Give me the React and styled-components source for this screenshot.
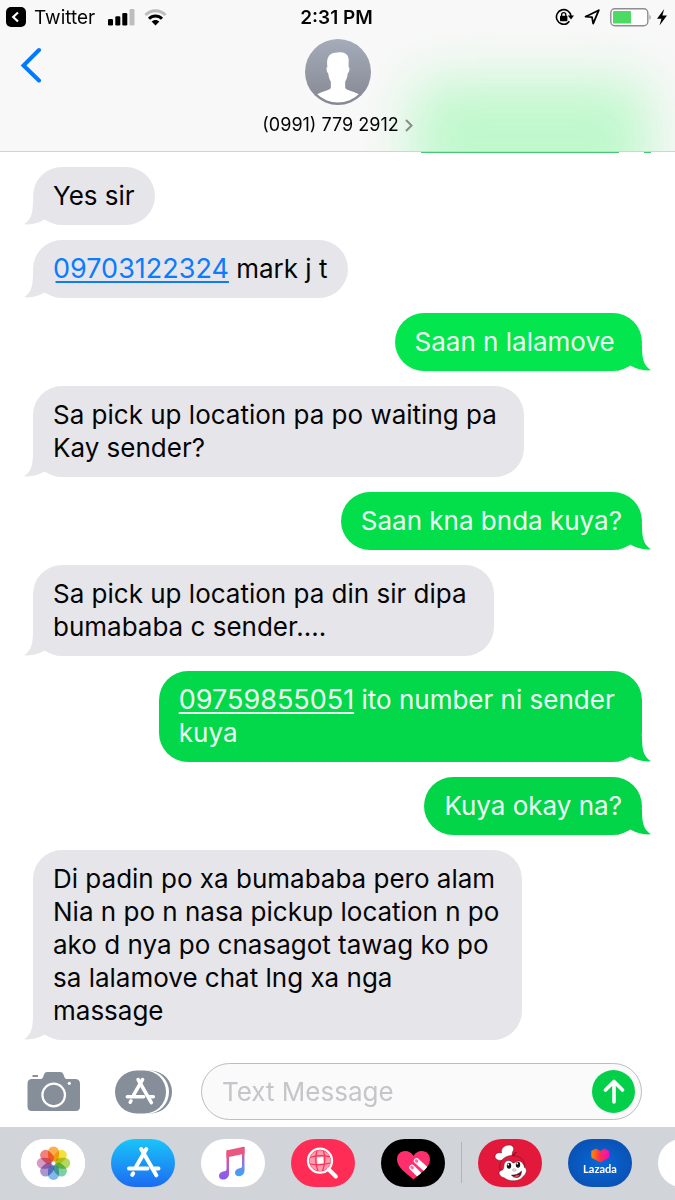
import React, { Fragment } from 'react';
import styled, { createGlobalStyle, css } from 'styled-components';

const GlobalStyle = createGlobalStyle`
  * {
    box-sizing: border-box;
  }
  body {
    margin: 0;
    background: #fff;
    color: #050507;
    font-family: Inter, "Liberation Sans", sans-serif;
  }
  button {
    border: 0;
    padding: 0;
    background: none;
    font: inherit;
    color: inherit;
    cursor: pointer;
  }
  svg {
    display: block;
  }
`;

const Screen = styled.div`
  display: flex;
  flex-direction: column;
  min-height: 100vh;
  overflow: hidden;
`;

const Header = styled.header`
  position: relative;
  background: #f8f8f8;
  border-bottom: 1px solid #d2d3d5;
`;

const GlowClip = styled.div`
  position: absolute;
  inset: 0;
  overflow: hidden;
  pointer-events: none;
  &::after {
    content: "";
    position: absolute;
    right: 26px;
    bottom: -50px;
    width: 236px;
    height: 120px;
    border-radius: 20px;
    background: #c0f8cc;
    filter: blur(26px);
  }
`;

const StatusBar = styled.div`
  position: relative;
  display: grid;
  grid-template-columns: 1fr auto 1fr;
  align-items: center;
  height: 34px;
  padding: 0 8px 0 6px;
  font-size: 19px;
`;

const StatusGroup = styled.div`
  display: flex;
  align-items: center;
  gap: ${props => props.$gap}px;
  justify-content: ${props => (props.$end ? 'flex-end' : 'flex-start')};
`;

const BackToApp = styled.button`
  display: flex;
  align-items: center;
  gap: 8px;
  margin-right: 4px;
`;

const Clock = styled.time`
  font-size: 19px;
  font-weight: 600;
`;

const NavBar = styled.div`
  position: relative;
  display: grid;
  grid-template-columns: 1fr auto 1fr;
  align-items: start;
  height: 117px;
  padding: 5px 20px 0;
`;

const BackButton = styled.button`
  justify-self: start;
  padding-top: 8px;
`;

const Contact = styled.button`
  display: flex;
  flex-direction: column;
  align-items: center;
  gap: 8px;
  font-size: 18px;
  line-height: 24px;
`;

const ContactName = styled.span`
  display: flex;
  align-items: center;
  gap: 6px;
`;

const Thread = styled.main`
  position: relative;
  flex: 1;
  display: flex;
  flex-direction: column;
  align-items: flex-start;
  gap: 15px;
  padding: 15px 33px 0;
`;

const ScrolledBubble = styled.div`
  position: absolute;
  top: 0;
  right: 24px;
  width: 230px;
  height: 1px;
  background: linear-gradient(to right, #45c873 86%, transparent 86%, transparent 97%, #45c873 97%);
`;

const Bubble = styled.div`
  position: relative;
  max-width: 82%;
  padding: 12px 20px 13px;
  border-radius: 29px;
  font-size: 26px;
  line-height: 33px;
  background: #e5e5ea;
  ${props => props.$sent && css`
    align-self: flex-end;
    background: ${props.$tone};
    color: #effff2;
  `}
`;

const Line = styled.span`
  display: block;
  white-space: break-spaces;
`;

const Tail = styled.svg`
  position: absolute;
  bottom: 0;
  width: 34px;
  height: 26px;
  left: -9px;
  fill: #e5e5ea;
  ${props => props.$sent && css`
    left: auto;
    right: -9px;
    transform: scaleX(-1);
    fill: ${props.$tone};
  `}
`;

const PhoneLink = styled.a`
  color: ${props => (props.$sent ? 'inherit' : '#0b7bff')};
  font-size: 27px;
  text-decoration: underline;
  text-decoration-thickness: 2px;
  text-underline-offset: 3px;
`;

const Composer = styled.form`
  display: flex;
  align-items: center;
  gap: 28px;
  padding: 23px 33px 7px 27px;
`;

const Tools = styled.div`
  display: flex;
  align-items: center;
  gap: 35px;
`;

const Field = styled.div`
  flex: 1;
  min-width: 0;
  display: flex;
  align-items: center;
  height: 57px;
  padding: 0 6px 0 20px;
  border: 1px solid #bcbdc2;
  border-radius: 29px;
  background: #fafafa;
`;

const TextInput = styled.input`
  flex: 1;
  min-width: 0;
  border: 0;
  outline: 0;
  padding: 0;
  background: none;
  font: inherit;
  font-size: 26px;
  &::placeholder {
    color: #c5c5ca;
    opacity: 1;
  }
`;

const SendButton = styled.button`
  display: grid;
  place-items: center;
  width: 43px;
  height: 43px;
  border-radius: 50%;
  background: #04cf48;
`;

const Dock = styled.nav`
  display: flex;
  align-items: center;
  gap: 26px;
  height: 73px;
  padding: 0 0 2px 21px;
  background: #d1d4d9;
  overflow: hidden;
`;

const AppButton = styled.button`
  flex: none;
  width: 64px;
  height: 48px;
  border-radius: 24px;
  overflow: hidden;
  background: ${props => props.$bg};
`;

const Divider = styled.span`
  flex: none;
  width: 1px;
  height: 41px;
  margin: 0 -10px;
  background: #b1b4ba;
`;

// trailing spaces are part of what was typed and widen the bubble
const messages = [
  { lines: ['Yes sir'] },
  { phone: '09703122324', lines: [' mark j t'] },
  { sent: true, tone: '#03e64d', lines: ['Saan n lalamove '] },
  { lines: ['Sa pick up location pa po waiting pa ', 'Kay sender?'] },
  { sent: true, tone: '#03de4b', lines: ['Saan kna bnda kuya?'] },
  { lines: ['Sa pick up location pa din sir dipa ', 'bumababa c sender....'] },
  { sent: true, tone: '#03d84a', phone: '09759855051', lines: [' ito number ni sender ', 'kuya'] },
  { sent: true, tone: '#03d549', lines: ['Kuya okay na?'] },
  {
    lines: [
      'Di padin po xa bumababa pero alam ',
      'Nia n po n nasa pickup location n po',
      'ako d nya po cnasagot tawag ko po ',
      'sa lalamove chat lng xa nga ',
      'massage',
    ],
  },
];

const Message = ({ sent, tone, phone, lines }) => (
  <Bubble $sent={sent} $tone={tone}>
    <Tail $sent={sent} $tone={tone} viewBox="0 0 34 26" aria-hidden="true">
      <path d="M9 0 C9 13 8 20 0 25.300 C8 26 15 24 20.500 20.500 L34 26 L30 0 Z" />
    </Tail>
    {lines.map((line, i) => (
      <Line key={line}>
        {i === 0 && phone && <PhoneLink $sent={sent} href={`tel:${phone}`}>{phone}</PhoneLink>}
        {line}
      </Line>
    ))}
  </Bubble>
);

const SignalIcon = () => (
  <svg width="27" height="17" viewBox="0 0 27 17">
    <rect x="0" y="10" width="5" height="6.500" rx="1.300" />
    <rect x="7.300" y="7.300" width="5" height="9.200" rx="1.300" />
    <rect x="14.300" y="4" width="5" height="12.500" rx="1.300" />
    <rect x="21.500" y="0" width="5" height="16.500" rx="1.300" fill="#bdbdbf" />
  </svg>
);

const WifiIcon = () => (
  <svg width="23" height="17" viewBox="0 0 23 17" fill="none">
    <path d="M1.500 6 C7 .2 16 .2 21.500 6" stroke="#bdbdbf" strokeWidth="3" />
    <path d="M5 9.700 C8.700 6 14.300 6 18 9.700" stroke="#000" strokeWidth="3" />
    <path d="M7.600 12.600 C9.800 10.400 13.200 10.400 15.400 12.600 L11.500 16.600 Z" fill="#000" />
  </svg>
);

const RotationLockIcon = () => (
  <svg width="19" height="18" viewBox="0 0 19 18" fill="none">
    <path d="M12.500 15.200 A7.300 7.300 0 1 1 16 8" stroke="#000" strokeWidth="1.600" />
    <path d="M12 15.500 A7.300 7.300 0 0 0 14.300 13.300" stroke="#000" strokeWidth="1.600" />
    <path d="M12.800 7.500 H19 L16 11.500 Z" fill="#000" />
    <rect x="5" y="7.800" width="7.400" height="5.400" rx=".8" fill="#000" />
    <path d="M6.600 8 V6.700 a2.100 2.100 0 0 1 4.200 0 V8" stroke="#000" strokeWidth="1.300" />
  </svg>
);

const LocationIcon = () => (
  <svg width="16" height="16" viewBox="0 0 16 16" fill="none" stroke="#000" strokeWidth="1.800" strokeLinejoin="round">
    <path d="M14.800 1.200 L1.500 7.700 L8 8.200 L9.200 14.700 Z" />
  </svg>
);

const BatteryIcon = () => (
  <svg width="42" height="19" viewBox="0 0 42 19">
    <rect x=".8" y=".8" width="37" height="17" rx="4" fill="#fdfdfd" stroke="#8e8e90" strokeWidth="1.400" />
    <rect x="3" y="3" width="18" height="12.600" rx="1.200" fill="#4cd964" />
    <path d="M39.500 6.500 q2.300 2.800 0 5.600 z" fill="#8e8e90" />
  </svg>
);

const BoltIcon = () => (
  <svg width="10" height="17" viewBox="0 0 10 17">
    <path d="M7.200 0 L0 9.700 H4.500 L2.500 16.500 L10 6.600 H5.400 Z" />
  </svg>
);

const Avatar = () => (
  <svg width="66" height="66" viewBox="0 0 66 66">
    <defs>
      <linearGradient id="avatar" x1="0" y1="0" x2="0" y2="1">
        <stop offset="0" stopColor="#a5abb9" />
        <stop offset="1" stopColor="#858892" />
      </linearGradient>
      <clipPath id="avatarClip"><circle cx="33" cy="33" r="30.500" /></clipPath>
    </defs>
    <circle cx="33" cy="33" r="33" fill="url(#avatar)" />
    <path
      clipPath="url(#avatarClip)"
      fill="#fff"
      d="M33 13.500 C40 12.500 44 16 43.700 22 L43.600 28 C45.200 28.500 44.500 33.500 42.700 34.500 C42.300 38.500 41.500 40.500 40.200 42.500 V49 C42 51.500 50 52.500 56 56.500 L50 66 H16 L10 56.500 C16 52.500 24 51.500 25.800 49 V42.500 C24.500 40.500 23.700 38.500 23.300 34.500 C21.500 33.500 20.800 28.500 22.400 28 C21 19 24 13 33 13.500 Z"
    />
  </svg>
);

const CameraIcon = () => (
  <svg width="53" height="40" viewBox="0 0 53 40" fill="#858e99">
    <rect x="5.500" y="3" width="5.500" height="2" rx=".6" />
    <path d="M5 7 H13 C16 7 16 5 17 2.500 C17.700 .8 18.500 0 20.500 0 H33 C35 0 35.800 .8 36.500 2.500 C37.500 5 37.500 7 40.500 7 H48 Q53 7 53 12 V34.500 Q53 39 48.500 39 H5 Q.5 39 .5 34.500 V12 Q.5 7 5 7 Z" />
    <circle cx="26.700" cy="23" r="11.300" fill="none" stroke="#fff" strokeWidth="2.200" />
    <circle cx="42.300" cy="11.300" r="1.600" fill="#fff" />
  </svg>
);

const storeStrokes = (
  <g fill="none" stroke="#fff" strokeWidth="4" strokeLinecap="round">
    <path d="M35.300 10 L25.200 27.500 M22.200 34.300 L21.200 35.800" />
    <path d="M30.200 10 L45.300 36.300" />
    <path d="M18 29.500 H36.500 M43.500 29.500 H47.500" />
  </g>
);

const StoreToggleIcon = () => (
  <svg width="58" height="44" viewBox="0 0 58 44">
    <rect x="10" y=".5" width="47" height="43" rx="21.500" fill="#858e99" />
    <rect x="5" y="0" width="49" height="44" rx="22" fill="#fff" />
    <rect x="0" y=".5" width="51" height="43" rx="21.500" fill="#858e99" />
    <g transform="translate(-3.500 .7) scale(.88)">{storeStrokes}</g>
  </svg>
);

const petals = ['#fbae4a', '#f5e13a', '#b4d95f', '#7fcfa6', '#82b9ea', '#a995d0', '#d79ac8', '#f4807a'];

const PetalShape = styled.rect`
  mix-blend-mode: multiply;
`;

const PhotosIcon = () => (
  <svg width="64" height="48" viewBox="0 0 64 48">
    <rect width="64" height="48" fill="#fff" />
    {petals.map((color, i) => (
      <PetalShape
        key={color}
        x="27"
        y="7.500"
        width="11"
        height="15"
        rx="5.500"
        fill={color}
        transform={`rotate(${i * 45} 32.500 24.200)`}
      />
    ))}
  </svg>
);

const StoreIcon = () => (
  <svg width="64" height="48" viewBox="0 0 64 48">{storeStrokes}</svg>
);

const MusicIcon = () => (
  <svg width="64" height="48" viewBox="0 0 64 48">
    <defs>
      <linearGradient id="noteLeft" x1="0" y1="0" x2="0" y2="1">
        <stop offset=".1" stopColor="#f4526d" />
        <stop offset=".55" stopColor="#b45ccc" />
        <stop offset="1" stopColor="#7d5cf5" />
      </linearGradient>
      <linearGradient id="noteRight" x1="0" y1="0" x2="0" y2="1">
        <stop offset=".1" stopColor="#ee5277" />
        <stop offset=".55" stopColor="#8a7be0" />
        <stop offset="1" stopColor="#35a7fa" />
      </linearGradient>
    </defs>
    <path fill="url(#noteLeft)" d="M25.500 11.500 H28 V35 C28 38.500 25 40.500 22 40.500 C19.500 40.500 18 39 18 36.700 C18 34 20.300 32.800 23 32.300 C25 32 25.500 31.500 25.500 30 Z" />
    <path fill="url(#noteRight)" d="M41 8 H43.500 V31.500 C43.500 35 41 37.200 38 37.200 C35.500 37.200 34 35.700 34 33.500 C34 31 36 29.700 38.700 29.200 C40.500 28.900 41 28.400 41 27 Z" />
    <path fill="#e95680" d="M25.500 12.500 Q25.500 11.500 26.500 11.200 L42.500 7.800 Q43.500 7.600 43.500 8.600 V14.800 L25.500 18.500 Z" />
  </svg>
);

const SearchIcon = () => (
  <svg width="64" height="48" viewBox="0 0 64 48" fill="none">
    <circle cx="29" cy="21.700" r="10.500" fill="#ff9bad" />
    <path d="M26 18.500 L32 18 L32.500 24 L26.500 25 Z" fill="#fff" />
    <path d="M18.500 18.500 Q29 15 39.500 18 M18.500 25 Q29 27 39.500 24 M26 11.500 Q23 22 27 32 M32.500 11.500 Q35.500 22 31.500 32" stroke="#ff2d55" strokeWidth="1.200" />
    <circle cx="29" cy="21.700" r="12" stroke="#fff" strokeWidth="2.300" />
    <path d="M37.800 30.500 L44.800 37.500" stroke="#fff" strokeWidth="4" strokeLinecap="round" />
  </svg>
);

const HeartTouchIcon = () => (
  <svg width="64" height="48" viewBox="0 0 64 48">
    <defs>
      <clipPath id="heartClip">
        <path d="M32.500 40.500 C25 34 16 28 16 20.500 C16 15.500 19.500 12 24 12 C28 12 31 14 32.500 17 C34 14 37 12 41 12 C45.500 12 49 15.500 49 20.500 C49 28 40 34 32.500 40.500 Z" />
      </clipPath>
    </defs>
    <g clipPath="url(#heartClip)">
      <rect width="64" height="48" fill="#ff2e6c" />
      <g fill="none" strokeLinecap="round">
        <path d="M31 28.500 L46 43.500 M35.500 21.800 L54 38.500" stroke="#fff" strokeWidth="5.500" />
        <path d="M30.800 28.300 L31.300 28.800 M35.300 21.600 L35.800 22.100" stroke="#ff6d97" strokeWidth="3" />
      </g>
    </g>
  </svg>
);

const JollibeeIcon = () => (
  <svg width="64" height="48" viewBox="0 0 64 48">
    <g stroke="#5b1020" strokeWidth=".5">
      <path d="M25 21 C21 22.500 16.500 20 17 17 C17.500 14 21 13 23.500 14 C22.500 10 26 6 31 6 C35.500 6 37 10 34.500 13 C34 15.500 34 16.500 34.200 18 Z" fill="#fff" />
      <path d="M22 31 C20 23 26 16.500 34 16.500 C43 16.500 48 22 46.500 31 Z" fill="#e3193c" />
      <path d="M22 32 C19.500 34 22 38 26.500 39 C31 43 42 43 45 37.500 C49 35 49.500 29 46.500 28.500 C46 24 42 20.500 38.500 22.500 C37 23.500 36 24 35 24 C32 20 26.500 21 26 26 C25.500 29 26 31 22 32 Z" fill="#fff" />
      <path d="M33.500 36 C37 36.500 41 35 43.500 32 C43.500 36 41.500 38.800 38.500 38.600 C36 38.500 34.500 37.500 33.500 36 Z" fill="#5b1020" />
    </g>
    <path d="M36 37.500 Q39 35.500 41.700 36.200 Q39.500 39.500 36 37.500" fill="#ee4458" />
    <ellipse cx="31" cy="26.800" rx="2.200" ry="3" fill="#151515" />
    <ellipse cx="40" cy="25.800" rx="2.200" ry="3" fill="#151515" />
    <circle cx="30.300" cy="25.500" r=".9" fill="#fff" />
    <circle cx="39.300" cy="24.500" r=".9" fill="#fff" />
    <ellipse cx="36.300" cy="31" rx="1.800" ry="1.200" fill="#f4eeee" stroke="#888" strokeWidth=".5" />
    <path d="M35 17 Q36 13.500 38.500 13.500" fill="none" stroke="#5b1020" strokeWidth="1" />
  </svg>
);

const LazadaIcon = () => (
  <svg width="64" height="48" viewBox="0 0 64 48">
    <defs>
      <linearGradient id="lazHeart">
        <stop offset="0" stopColor="#ff8a00" />
        <stop offset=".5" stopColor="#fb2f4b" />
        <stop offset="1" stopColor="#f208c4" />
      </linearGradient>
    </defs>
    <path d="M23.300 12 L27.500 9.800 Q28.300 9.500 29 10 L32.300 12 L35.500 10 Q36.300 9.500 37 9.800 L41.300 12 V17.500 Q41.300 18.500 40.500 19 L32.300 23.500 L24 19 Q23.300 18.500 23.300 17.500 Z" fill="url(#lazHeart)" />
    <path d="M32.300 12 L41 12.500 L32.300 17.500 Z" fill="#f5289b" opacity=".6" />
    <text x="32" y="34" textAnchor="middle" fill="#fff" fontFamily="Lato, sans-serif" fontWeight="700" fontSize="11">Lazada</text>
  </svg>
);

const pinned = [
  { name: 'Photos', bg: '#fff', Icon: PhotosIcon },
  { name: 'App Store', bg: 'linear-gradient(#19c5f9, #1c6bf2)', Icon: StoreIcon },
  { name: 'Music', bg: '#fff', Icon: MusicIcon },
  { name: 'Image search', bg: '#ff2d55', Icon: SearchIcon },
  { name: 'Digital Touch', bg: '#000', Icon: HeartTouchIcon },
];

const installed = [
  { name: 'Jollibee', bg: '#e3193c', Icon: JollibeeIcon },
  { name: 'Lazada', bg: 'radial-gradient(#0868d8, #0a4aa8)', Icon: LazadaIcon },
  { name: 'More', bg: '#fff', Icon: Fragment },
];

const renderApp = ({ name, bg, Icon }) => (
  <AppButton key={name} type="button" aria-label={name} $bg={bg}><Icon /></AppButton>
);

const App = () => (
  <Screen>
    <GlobalStyle />
    <Header>
      <GlowClip />
      <StatusBar>
        <StatusGroup $gap={9}>
          <BackToApp type="button">
            <svg width="20" height="20" viewBox="0 0 20 20">
              <rect width="20" height="20" rx="5" />
              <path d="M12 5.500 L7.200 10 L12 14.500" fill="none" stroke="#fff" strokeWidth="2.200" />
            </svg>
            Twitter
          </BackToApp>
          <SignalIcon />
          <WifiIcon />
        </StatusGroup>
        <Clock>2:31 PM</Clock>
        <StatusGroup $gap={10} $end>
          <RotationLockIcon />
          <LocationIcon />
          <StatusGroup $gap={5}>
            <BatteryIcon />
            <BoltIcon />
          </StatusGroup>
        </StatusGroup>
      </StatusBar>
      <NavBar>
        <BackButton type="button" aria-label="Back">
          <svg width="22" height="36" viewBox="0 0 22 36" fill="none" stroke="#007aff" strokeWidth="4" strokeLinecap="round">
            <path d="M19 3 L3.500 18.500 L19 33.500" />
          </svg>
        </BackButton>
        <Contact type="button">
          <Avatar />
          <ContactName>
            (0991) 779 2912
            <svg width="8" height="13" viewBox="0 0 8 13" fill="none" stroke="#8a8a8e" strokeWidth="2">
              <path d="M1 1 L6.500 6.500 L1 12" />
            </svg>
          </ContactName>
        </Contact>
      </NavBar>
    </Header>
    <Thread>
      <ScrolledBubble />
      {messages.map(message => <Message key={message.lines[0]} {...message} />)}
    </Thread>
    <Composer onSubmit={e => e.preventDefault()}>
      <Tools>
        <button type="button" aria-label="Camera"><CameraIcon /></button>
        <button type="button" aria-label="Apps"><StoreToggleIcon /></button>
      </Tools>
      <Field>
        <TextInput type="text" aria-label="Text Message" placeholder="Text Message" />
        <SendButton type="submit" aria-label="Send">
          <svg width="22" height="25" viewBox="0 0 22 25" fill="none" stroke="#fff" strokeWidth="3.600" strokeLinecap="round" strokeLinejoin="round">
            <path d="M11 23 V2.500 M2.500 11 L11 2.500 L19.500 11" />
          </svg>
        </SendButton>
      </Field>
    </Composer>
    <Dock>
      {pinned.map(renderApp)}
      <Divider />
      {installed.map(renderApp)}
    </Dock>
  </Screen>
);

export default App;
